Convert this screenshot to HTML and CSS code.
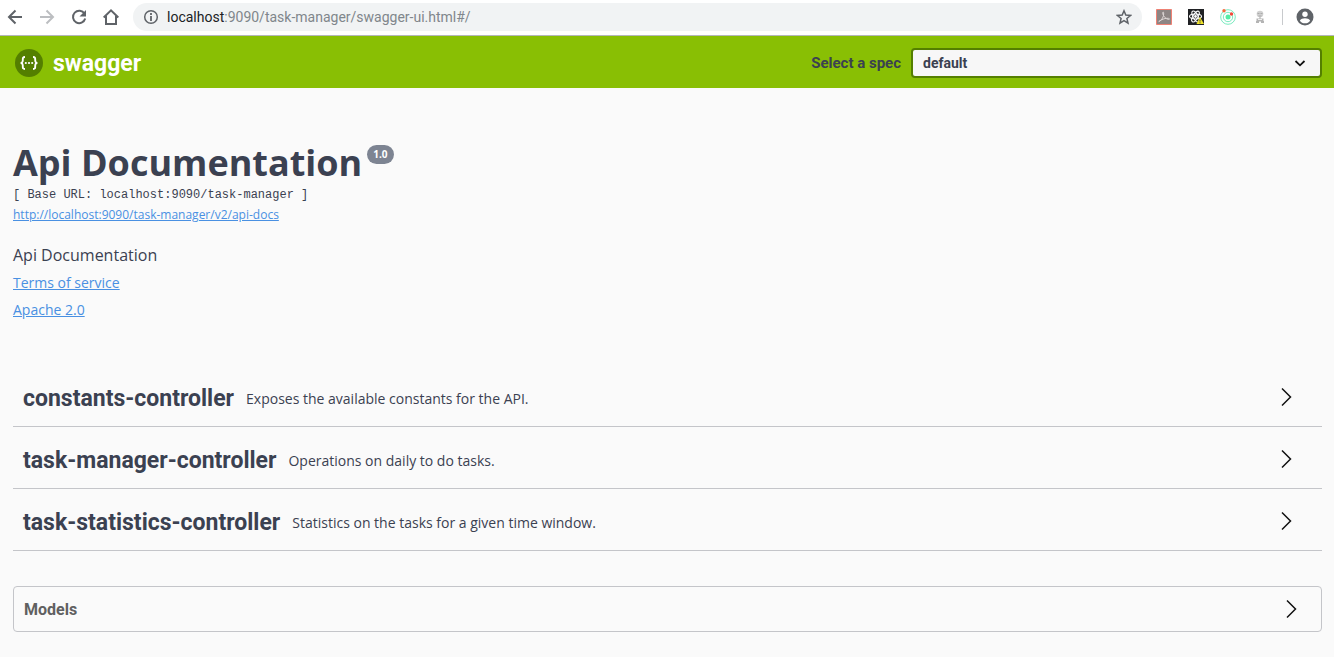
FILE: index.html
```html
<!DOCTYPE html>
<html lang="en">
<head>
<meta charset="utf-8">
<meta name="viewport" content="width=device-width, initial-scale=1">
<title>Swagger UI</title>
<link rel="stylesheet" href="styles.css">
</head>
<body>
<div class="browser">
  <button class="tool" aria-label="Back"><svg width="16" height="16" viewBox="0 0 16 16" fill="none" stroke="#5f6368" stroke-width="2"><path d="M15 8H2M8.500 1.500 2 8l6.500 6.500"/></svg></button>
  <button class="tool" aria-label="Forward"><svg width="16" height="16" viewBox="0 0 16 16" fill="none" stroke="#bcbec1" stroke-width="2"><path d="M1 8h13M7.500 1.500 14 8l-6.500 6.500"/></svg></button>
  <button class="tool" aria-label="Reload"><svg width="16" height="16" viewBox="0 0 16 16" fill="none" stroke="#5f6368" stroke-width="2"><path d="M13.500 4.700A6.200 6.200 0 1 0 14.200 9.500"/><path d="M15 1v6.500H8.500z" fill="#5f6368" stroke="none"/></svg></button>
  <button class="tool" aria-label="Home"><svg width="16" height="18" viewBox="1 0 16 18" fill="none" stroke="#5f6368" stroke-width="2"><path d="M1.700 9.500 9 2.300l7.300 7.200M4 8v8h10V8"/></svg></button>
  <div class="address">
    <svg width="16" height="16" viewBox="0 0 16 16" fill="none" stroke="#5f6368"><circle cx="8" cy="8" r="6.300" stroke-width="1.500"/><path d="M8 7v5M8 4v2" stroke-width="1.800"/></svg>
    <span class="url"><span class="host">localhost</span>:9090/task-manager/swagger-ui.html#/</span>
    <button class="tool" aria-label="Bookmark"><svg width="16" height="16" viewBox="0 0 16 16" fill="none" stroke="#5f6368" stroke-width="1.500"><path d="m8 1.800 1.800 4.300 4.700.4-3.600 3 1.100 4.600L8 11.600l-4 2.500 1.100-4.600-3.600-3 4.700-.4z"/></svg></button>
  </div>
  <div class="extensions">
    <button class="tool" aria-label="PDF"><svg width="16" height="16" viewBox="0 0 16 16"><path d="M.5.5h15v15H.5z" fill="#8d8584" stroke="#ee8174"/><path d="M3 12.500c3-1.500 5-5 4.700-8.500-.1-1.500-1.300-1-1 .3.500 3 3 5.700 6 6.200 1.200.1 1.100-1.100-.3-1.200-3-.3-6 .8-8.700 2.700-.9.600-1.200.8-.7.500z" fill="none" stroke="#ddd6d5"/></svg></button>
    <button class="tool" aria-label="React tools"><svg width="16" height="16" viewBox="0 0 16 16"><path d="M0 0h16v16H0z" fill="#202124"/><g fill="none" stroke="#fff" stroke-width="1.100"><ellipse cx="7.500" cy="7.500" rx="6" ry="2.500"/><ellipse cx="7.500" cy="7.500" rx="6" ry="2.500" transform="rotate(60 7.500 7.500)"/><ellipse cx="7.500" cy="7.500" rx="6" ry="2.500" transform="rotate(120 7.500 7.500)"/></g><circle cx="7.500" cy="7.500" r="1.400" fill="#fff"/><path d="m12 8 4 7H8.500z" fill="#eee22a"/><path d="M12 10.500v2m0 .8v1" stroke="#444"/></svg></button>
    <button class="tool" aria-label="Orbit"><svg width="16" height="16" viewBox="0 0 16 16"><g fill="none" stroke="#79ebbf"><circle cx="8" cy="8" r="7.300"/><circle cx="8" cy="8" r="4.700"/></g><circle cx="8" cy="8" r="2.500" fill="#55eda5"/><circle cx="4" cy="1.800" r="1.700" fill="#f4693b"/><circle cx="11.500" cy="5" r="1.700" fill="#f4493b"/></svg></button>
    <button class="tool" aria-label="Helper"><svg width="16" height="16" viewBox="0 0 16 16"><circle cx="8" cy="5" r="3.300" fill="#d0d0d0"/><path d="M5.500 4.500h2M8.500 4.500h2M6.500 7h3M8 8v3" stroke="#aaa"/><path d="M4.500 9.500h7v3h-7zM4 12h3v2H4zM9 12h3v2H9z" fill="#b4b4b4"/><path d="M6 10.500h4" stroke="#eee"/></svg></button>
    <span class="divider"></span>
    <button class="tool" aria-label="Profile"><svg width="18" height="18" viewBox="0 0 18 18"><circle cx="9" cy="9" r="8.500" fill="#5f6368"/><circle cx="9" cy="6.300" r="2.700" fill="#fff"/><path d="M3.800 12.700c1-1.800 3.100-2.500 5.200-2.500s4.200.7 5.200 2.500c-1.200 1.700-3 2.600-5.200 2.600s-4-.9-5.200-2.600z" fill="#fff"/></svg></button>
  </div>
</div>

<header class="topbar">
  <a class="brand" href="#">
    <svg width="28" height="28" viewBox="0 0 28 28"><circle cx="14" cy="14" r="14" fill="#547f00"/><g fill="none" stroke="#fff" stroke-width="1.900"><path d="M10 8C7.600 8 7.800 9 7.800 11s0 2.500-2 3c2 .5 2 1 2 3s-.2 3 2.200 3M18 8c2.400 0 2.200 1 2.200 3s0 2.500 2 3c-2 .5-2 1-2 3s.2 3-2.200 3"/></g><g fill="#fff"><circle cx="10.800" cy="14" r="1.100"/><circle cx="14" cy="14" r="1.100"/><circle cx="17.200" cy="14" r="1.100"/></g></svg>
    <span>swagger</span>
  </a>
  <div class="spec">
    <label for="spec">Select a spec</label>
    <div class="select">
      <select id="spec"><option>default</option></select>
      <svg class="caret" width="12" height="12" viewBox="0 0 12 12" fill="none" stroke="#111" stroke-width="1.800"><path d="m1.500 4 4.500 4.300L10.500 4"/></svg>
    </div>
  </div>
</header>

<main class="page">
  <section class="info">
    <h1>Api Documentation<span class="version">1.0</span></h1>
    <pre class="base">[ Base URL: localhost:9090/task-manager ]</pre>
    <a class="docs" href="#">http://localhost:9090/task-manager/v2/api-docs</a>
    <p>Api Documentation</p>
    <a href="#">Terms of service</a>
    <a href="#">Apache 2.0</a>
  </section>

  <section class="tags">
    <button class="tag"><span class="name">constants-controller</span><span class="desc">Exposes the available constants for the API.</span><svg width="20" height="20" viewBox="0 0 20 20" fill="none" stroke="#111" stroke-width="1.500"><path d="m6 1.500 8.500 8.500L6 18.500"/></svg></button>
    <button class="tag"><span class="name">task-manager-controller</span><span class="desc">Operations on daily to do tasks.</span><svg width="20" height="20" viewBox="0 0 20 20" fill="none" stroke="#111" stroke-width="1.500"><path d="m6 1.500 8.500 8.500L6 18.500"/></svg></button>
    <button class="tag"><span class="name">task-statistics-controller</span><span class="desc">Statistics on the tasks for a given time window.</span><svg width="20" height="20" viewBox="0 0 20 20" fill="none" stroke="#111" stroke-width="1.500"><path d="m6 1.500 8.500 8.500L6 18.500"/></svg></button>
  </section>

  <button class="models"><span>Models</span><svg width="20" height="20" viewBox="0 0 20 20" fill="none" stroke="#111" stroke-width="1.500"><path d="m6 1.500 8.500 8.500L6 18.500"/></svg></button>
</main>
</body>
</html>
```
FILE: styles.css
```css
* { box-sizing: border-box; }
body { margin: 0; background: #fafafa; color: #3b4151; font-family: "Open Sans", sans-serif; font-size: 14px; }
button { margin: 0; padding: 0; border: 0; background: none; color: inherit; font: inherit; cursor: pointer; }
svg { display: block; flex: none; }

.browser { display: flex; align-items: center; gap: 16px; height: 36px; padding: 0 20px 2px 7px; background: #fff; border-bottom: 1px solid #b4b6ba; }
.tool { flex: none; }
.address { display: flex; flex: 1; align-items: center; gap: 8px; height: 28px; margin-left: -2px; padding: 0 10px; border-radius: 14px; background: #f1f3f4; }
.url { flex: 1; color: #80868b; font: 14px Roboto, sans-serif; }
.host { color: #202124; }
.extensions { display: flex; align-items: center; gap: 16px; margin-left: -2px; }
.divider { width: 1px; height: 16px; margin: 0 -3px 0 -2px; background: #c8cacd; }

.topbar { display: flex; align-items: center; justify-content: space-between; height: 52px; padding: 2px 12px 0 15px; background: #89bf04; font-family: Roboto, sans-serif; font-weight: 700; }
.brand { display: flex; align-items: center; gap: 10px; color: #fff; font-size: 23px; text-decoration: none; }
.spec { display: flex; align-items: center; gap: 10px; }
.spec label { font-size: 15px; }
.select { position: relative; width: 411px; }
.select select { display: block; width: 100%; height: 30px; padding: 0 40px 0 10px; border: 2px solid #547f00; border-radius: 4px; background: #f7f7f7; color: #3b4151; font: 700 14px Roboto, sans-serif; appearance: none; }
.caret { position: absolute; top: 9px; right: 16px; pointer-events: none; }

.page { padding: 52px 12px 24px 13px; }
.info { display: flex; flex-direction: column; align-items: flex-start; }
.info h1 { display: flex; align-items: flex-start; gap: 5px; margin: 0; font-size: 36px; line-height: 46px; }
.version { margin-top: 5px; padding: 0 6px; border-radius: 10px; background: #7d8492; color: #fff; font-size: 10px; line-height: 19px; }
.base { margin: 0; font: 12px/18px "Liberation Mono", monospace; }
.info a { color: #4990e2; line-height: 27px; }
.info .docs { font-size: 12px; line-height: 22px; }
.info p { margin: 17px 0 2px; font-size: 16px; line-height: 24px; }

.tags { margin-top: 42px; }
.tag { display: flex; align-items: center; gap: 12px; width: 100%; height: 62px; padding: 6px 26px 0 10px; border-bottom: 1px solid #c4c5c9; text-align: left; }
.tag svg { margin-bottom: 4px; }
.name { font: 700 23px/30px Roboto, sans-serif; }
.desc { flex: 1; }

.models { display: flex; align-items: center; justify-content: space-between; width: 100%; height: 46px; margin-top: 35px; padding: 0 20px 0 10px; border: 1px solid #c4c5c9; border-radius: 4px; color: #606060; font: 700 16px Roboto, sans-serif; }
```
